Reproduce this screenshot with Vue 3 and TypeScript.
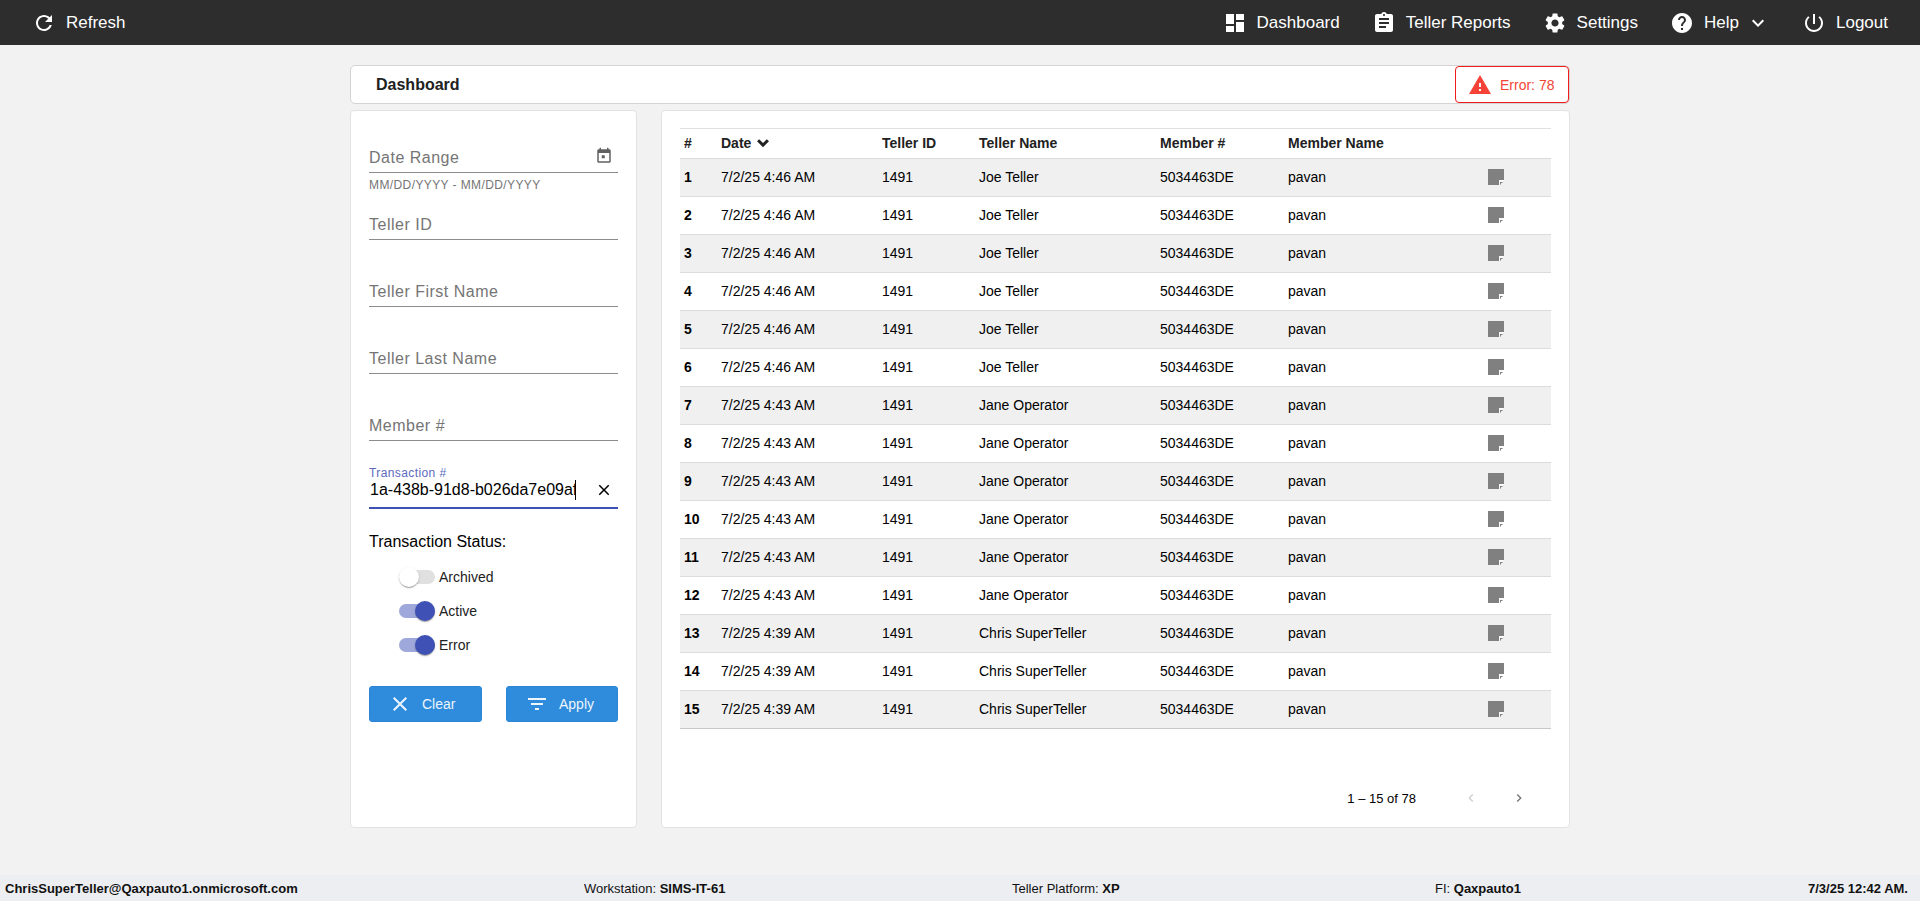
<script setup lang="ts">
const icons: Record<string, string> = {
  refresh: 'M17.65 6.35C16.2 4.9 14.21 4 12 4c-4.42 0-7.99 3.58-7.99 8s3.57 8 7.99 8c3.73 0 6.84-2.55 7.73-6h-2.08c-.82 2.33-3.04 4-5.65 4-3.31 0-6-2.69-6-6s2.69-6 6-6c1.66 0 3.14.69 4.22 1.78L13 11h7V4l-2.35 2.35z',
  dashboard: 'M3 13h8V3H3v10zm0 8h8v-6H3v6zm10 0h8V11h-8v10zm0-18v6h8V3h-8z',
  assignment: 'M19 3h-4.18C14.4 1.84 13.3 1 12 1c-1.3 0-2.4.84-2.82 2H5c-1.1 0-2 .9-2 2v14c0 1.1.9 2 2 2h14c1.1 0 2-.9 2-2V5c0-1.1-.9-2-2-2zm-7 0c.55 0 1 .45 1 1s-.45 1-1 1-1-.45-1-1 .45-1 1-1zm2 14H7v-2h7v2zm3-4H7v-2h10v2zm0-4H7V7h10v2z',
  settings: 'M19.14 12.94c.04-.3.06-.61.06-.94 0-.32-.02-.64-.07-.94l2.03-1.58c.18-.14.23-.41.12-.61l-1.92-3.32c-.12-.22-.37-.29-.59-.22l-2.39.96c-.5-.38-1.03-.7-1.62-.94l-.36-2.54c-.04-.24-.24-.41-.48-.41h-3.84c-.24 0-.43.17-.47.41l-.36 2.54c-.59.24-1.13.57-1.62.94l-2.39-.96c-.22-.08-.47 0-.59.22L2.74 8.87c-.12.21-.08.47.12.61l2.03 1.58c-.05.3-.09.63-.09.94s.02.64.07.94l-2.03 1.58c-.18.14-.23.41-.12.61l1.92 3.32c.12.22.37.29.59.22l2.39-.96c.5.38 1.03.7 1.62.94l.36 2.54c.05.24.24.41.48.41h3.84c.24 0 .44-.17.47-.41l.36-2.54c.59-.24 1.13-.56 1.62-.94l2.39.96c.22.08.47 0 .59-.22l1.92-3.32c.12-.22.07-.47-.12-.61l-2.01-1.58zM12 15.6c-1.98 0-3.6-1.62-3.6-3.6s1.62-3.6 3.6-3.6 3.6 1.62 3.6 3.6-1.62 3.6-3.6 3.6z',
  help: 'M12 2C6.48 2 2 6.48 2 12s4.48 10 10 10 10-4.48 10-10S17.52 2 12 2zm1 17h-2v-2h2v2zm2.07-7.75l-.9.92C13.45 12.9 13 13.5 13 15h-2v-.5c0-1.1.45-2.1 1.17-2.83l1.24-1.26c.37-.36.59-.86.59-1.41 0-1.1-.9-2-2-2s-2 .9-2 2H8c0-2.21 1.79-4 4-4s4 1.79 4 4c0 .88-.36 1.68-.93 2.25z',
  power: 'M13 3h-2v10h2V3zm4.83 2.17l-1.42 1.42C17.99 7.86 19 9.81 19 12c0 3.87-3.13 7-7 7s-7-3.13-7-7c0-2.19 1.01-4.14 2.58-5.42L6.17 5.17C4.23 6.82 3 9.26 3 12c0 4.97 4.03 9 9 9s9-4.03 9-9c0-2.74-1.23-5.18-3.17-6.83z',
  warning: 'M1 21h22L12 2 1 21zm12-3h-2v-2h2v2zm0-4h-2v-4h2v4z',
  event: 'M19 3h-1V1h-2v2H8V1H6v2H5c-1.11 0-1.99.9-1.99 2L3 19c0 1.1.89 2 2 2h14c1.1 0 2-.9 2-2V5c0-1.1-.9-2-2-2zm0 16H5V8h14v11zM9 11h4v4H9z',
  clear: 'M19 6.41L17.59 5 12 10.59 6.41 5 5 6.41 10.59 12 5 17.59 6.41 19 12 13.41 17.59 19 19 17.59 13.41 12z',
  filter: 'M10 18h4v-2h-4v2zM3 6v2h18V6H3zm3 7h12v-2H6v2z',
  down: 'M16.59 8.59L12 13.17 7.41 8.59 6 10l6 6 6-6z',
  left: 'M15.41 7.41L14 6l-6 6 6 6 1.41-1.41L10.83 12z',
  right: 'M10 6L8.59 7.41 13.17 12l-4.58 4.58L10 18l6-6z',
}

const navItems = [
  { icon: 'dashboard', label: 'Dashboard' },
  { icon: 'assignment', label: 'Teller Reports' },
  { icon: 'settings', label: 'Settings' },
  { icon: 'help', label: 'Help', caret: true },
  { icon: 'power', label: 'Logout' },
]

const fields = ['Teller ID', 'Teller First Name', 'Teller Last Name', 'Member #']

const toggles = [
  { label: 'Archived', on: false },
  { label: 'Active', on: true },
  { label: 'Error', on: true },
]

const heads = ['#', 'Date', 'Teller ID', 'Teller Name', 'Member #', 'Member Name', '']

const rows = Array.from({ length: 15 }, (_, i) => {
  const n = i + 1
  return {
    n,
    date: n <= 6 ? '7/2/25 4:46 AM' : n <= 12 ? '7/2/25 4:43 AM' : '7/2/25 4:39 AM',
    id: '1491',
    name: n <= 6 ? 'Joe Teller' : n <= 12 ? 'Jane Operator' : 'Chris SuperTeller',
    member: '5034463DE',
    memberName: 'pavan',
  }
})
</script>

<template>
  <div class="page">
    <header class="topbar">
      <div class="nav-item refresh">
        <svg class="ico" viewBox="0 0 24 24"><path :d="icons.refresh" /></svg>
        <span>Refresh</span>
      </div>
      <nav class="nav">
        <div v-for="item in navItems" :key="item.label" class="nav-item">
          <svg class="ico" viewBox="0 0 24 24"><path :d="icons[item.icon]" /></svg>
          <span>{{ item.label }}</span>
          <svg v-if="item.caret" class="caret" viewBox="0 0 24 24"><path :d="icons.down" /></svg>
        </div>
      </nav>
    </header>

    <main class="main">
      <div class="title-card">
        <h1 class="title">Dashboard</h1>
        <div class="error-box">
          <svg class="warn" viewBox="0 0 24 24"><path :d="icons.warning" /></svg>
          <span>Error: 78</span>
        </div>
      </div>

      <div class="columns">
        <aside class="card filters">
          <div class="field date">
            <span class="placeholder">Date Range</span>
            <svg class="cal" viewBox="0 0 24 24"><path :d="icons.event" /></svg>
            <span class="hint">MM/DD/YYYY - MM/DD/YYYY</span>
          </div>
          <div v-for="f in fields" :key="f" class="field">
            <span class="placeholder">{{ f }}</span>
          </div>
          <div class="field focused">
            <span class="float-label">Transaction #</span>
            <div class="value-row">
              <span class="value">1a-438b-91d8-b026da7e09af</span>
              <svg class="x" viewBox="0 0 24 24"><path :d="icons.clear" /></svg>
            </div>
          </div>

          <div class="status-label">Transaction Status:</div>
          <div v-for="t in toggles" :key="t.label" class="toggle-row">
            <span class="track" :class="{ on: t.on }"><span class="thumb"></span></span>
            <span>{{ t.label }}</span>
          </div>

          <div class="actions">
            <button class="btn" type="button">
              <svg viewBox="0 0 24 24"><path :d="icons.clear" /></svg>
              <span>Clear</span>
            </button>
            <button class="btn" type="button">
              <svg viewBox="0 0 24 24"><path :d="icons.filter" /></svg>
              <span>Apply</span>
            </button>
          </div>
        </aside>

        <section class="card results">
          <table class="table">
            <colgroup>
              <col class="c1" /><col class="c2" /><col class="c3" /><col class="c4" /><col class="c5" /><col class="c6" /><col />
            </colgroup>
            <thead>
              <tr>
                <th v-for="h in heads" :key="h">
                  {{ h }}
                  <svg v-if="h === 'Date'" class="sort" viewBox="0 0 24 24"><path :d="icons.down" /></svg>
                </th>
              </tr>
            </thead>
            <tbody>
              <tr v-for="r in rows" :key="r.n">
                <td class="num">{{ r.n }}</td>
                <td>{{ r.date }}</td>
                <td>{{ r.id }}</td>
                <td class="name">{{ r.name }}</td>
                <td>{{ r.member }}</td>
                <td>{{ r.memberName }}</td>
                <td>
                  <svg class="note" viewBox="0 0 16 16">
                    <path class="note-body" d="M0 0h16v11h-5v5H0z" />
                    <path class="note-fold" d="M11 11h5l-5 5z" />
                    <path class="note-mark" d="M12 13h3l-1 1h-1v1l-1 1z" />
                  </svg>
                </td>
              </tr>
            </tbody>
          </table>
          <div class="paginator">
            <span class="range">1 – 15 of 78</span>
            <svg class="page-btn disabled" viewBox="0 0 24 24"><path :d="icons.left" /></svg>
            <svg class="page-btn" viewBox="0 0 24 24"><path :d="icons.right" /></svg>
          </div>
        </section>
      </div>
    </main>

    <footer class="footer">
      <b>ChrisSuperTeller@Qaxpauto1.onmicrosoft.com</b>
      <span>Workstation: <b>SIMS-IT-61</b></span>
      <span>Teller Platform: <b>XP</b></span>
      <span>FI: <b>Qaxpauto1</b></span>
      <b class="clock">7/3/25 12:42 AM.</b>
    </footer>
  </div>
</template>

<style>
html, body { margin: 0; background: #f2f2f2; }
</style>

<style scoped>
.page {
  display: flex;
  flex-direction: column;
  height: 901px;
  overflow: hidden;
  background: #f2f2f2;
  font-family: "Liberation Sans", Arial, sans-serif;
  color: #000;
}
.topbar {
  flex: none;
  height: 45px;
  display: flex;
  align-items: center;
  justify-content: space-between;
  padding: 0 32px;
  background: #2d2d2d;
  color: #fff;
  font-size: 17px;
}
.nav { display: flex; gap: 32px; }
.nav-item { display: flex; align-items: center; gap: 10px; }
.ico { width: 24px; height: 24px; fill: #fff; flex: none; }
.caret { width: 24px; height: 24px; fill: #fff; margin-left: -3px; }

.main { flex: 1; width: 1220px; margin: 0 auto; padding-top: 20px; }
.title-card {
  height: 39px;
  box-sizing: border-box;
  display: flex;
  align-items: center;
  justify-content: space-between;
  background: #fff;
  border: 1px solid #d4d4d4;
  border-radius: 5px;
  padding-left: 25px;
}
.title { margin: 0; font-size: 16px; font-weight: 700; color: #212121; }
.error-box {
  width: 114px;
  height: 37px;
  box-sizing: border-box;
  display: flex;
  align-items: center;
  gap: 8px;
  padding-left: 12px;
  background: #fff;
  border: 1px solid #f01c1c;
  border-radius: 4px;
  color: #f44336;
  font-size: 14px;
}
.warn { width: 24px; height: 24px; fill: #f44336; }

.columns { display: flex; gap: 24px; margin-top: 6px; height: 718px; }
.card {
  box-sizing: border-box;
  background: #fff;
  border: 1px solid #e2e2e2;
  border-radius: 4px;
}
.filters { width: 287px; padding: 13px 18px 0; flex: none; }
.results { flex: 1; padding: 17px 18px 0; }

.field {
  position: relative;
  height: 49px;
  box-sizing: border-box;
  border-bottom: 1px solid #8c8c8c;
  margin-bottom: 18px;
  display: flex;
  align-items: flex-end;
  padding-bottom: 4px;
}
.placeholder { font-size: 16px; line-height: 20px; letter-spacing: .5px; color: #757575; }
.cal { position: absolute; right: 5px; bottom: 7px; width: 18px; height: 18px; fill: #616161; }
.hint {
  position: absolute;
  left: 0;
  top: 54px;
  font-size: 12px;
  line-height: 14px;
  letter-spacing: .4px;
  color: #757575;
}
.focused {
  border-bottom: 2px solid #3f51b5;
  flex-direction: column;
  align-items: stretch;
  justify-content: flex-end;
  height: 50px;
  margin-bottom: 0;
  padding-bottom: 7px;
}
.float-label { font-size: 12px; line-height: 14px; letter-spacing: .4px; color: #5c6bc0; }
.value-row { display: flex; align-items: center; justify-content: space-between; height: 20px; }
.value {
  width: 207px;
  overflow: hidden;
  white-space: nowrap;
  font-size: 16px;
  line-height: 20px;
  padding-left: 1px;
  box-sizing: border-box;
  border-right: 1px solid #000;
}
.x { width: 18px; height: 18px; fill: #000; margin-right: 5px; }

.status-label { margin-top: 23px; margin-bottom: 8px; font-size: 16px; line-height: 20px; }
.toggle-row {
  height: 34px;
  display: flex;
  align-items: center;
  gap: 4px;
  padding-left: 30px;
  font-size: 14px;
  color: #212121;
}
.track {
  position: relative;
  width: 36px;
  height: 14px;
  border-radius: 7px;
  background: #e0e0e0;
}
.thumb {
  position: absolute;
  top: -3px;
  left: 0;
  width: 20px;
  height: 20px;
  border-radius: 50%;
  background: #fff;
  box-shadow: 0 2px 1px -1px rgba(0,0,0,.2), 0 1px 1px rgba(0,0,0,.14), 0 1px 3px rgba(0,0,0,.12);
}
.track.on { background: #9fa8da; }
.track.on .thumb { left: 16px; background: #3f51b5; }

.actions { display: flex; justify-content: space-between; margin-top: 24px; }
.btn {
  width: 112px;
  height: 36px;
  display: flex;
  align-items: center;
  gap: 10px;
  border: 1px solid #2b85d3;
  border-radius: 3px;
  background: #2f8cdc;
  color: #eef5fb;
  font-family: inherit;
  font-size: 14px;
  padding: 0 0 0 18px;
}
.btn:first-child { width: 113px; }
.btn svg { width: 24px; height: 24px; fill: #eef5fb; }

.table { width: 100%; table-layout: fixed; border-collapse: collapse; font-size: 14px; border-top: 1px solid #e0e0e0; }
.c1 { width: 41px; }
.c2 { width: 161px; }
.c3 { width: 97px; }
.c4 { width: 181px; }
.c5 { width: 128px; }
.c6 { width: 200px; }
th {
  height: 28px;
  padding: 0 0 1px;
  text-align: left;
  font-weight: 700;
  color: #212121;
  border-bottom: 1px solid #dcdcdc;
  white-space: nowrap;
}
th:first-child, td:first-child { padding-left: 4px; }
td { height: 35px; padding: 0 0 2px; border-bottom: 1px solid #dcdcdc; }
tbody tr:nth-child(odd) { background: #f0f0f0; }
tbody tr:last-child td { border-bottom: 1px solid #c8c8c8; }
.num { font-weight: 700; }
.sort { width: 20px; height: 20px; fill: #212121; vertical-align: -5px; margin-left: -2px; stroke: #212121; stroke-width: 1.6; }
.note { display: block; width: 16px; height: 16px; }
.note-body { fill: #808080; }
.note-fold { fill: #fafafa; }
.note-mark { fill: #808080; }

.paginator {
  display: flex;
  align-items: center;
  height: 48px;
  margin-top: 45px;
  font-size: 13px;
  position: relative;
  justify-content: flex-end;
}
.range { margin-right: 47px; }
.page-btn { width: 16px; height: 16px; fill: #757575; margin-right: 24px; }
.page-btn:last-child { margin-left: 8px; }
.page-btn.disabled { fill: #cfcfcf; }

.footer {
  flex: none;
  height: 26px;
  display: grid;
  grid-template-columns: 579px 428px 423px 373px 1fr;
  align-items: center;
  padding-left: 5px;
  padding-right: 14px;
  background: #eceef1;
  font-size: 13px;
  color: #111;
}
.clock { white-space: nowrap; justify-self: end; }
</style>
